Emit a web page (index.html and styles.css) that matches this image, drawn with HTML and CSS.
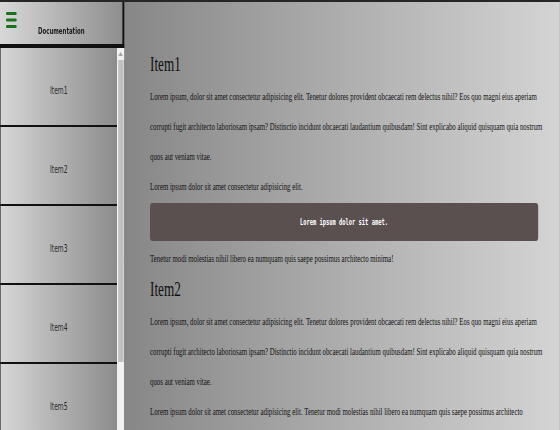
FILE: index.html
```html
<!DOCTYPE html>
<html lang="en">
<head>
<meta charset="utf-8">
<title>Documentation</title>
<link rel="stylesheet" href="styles.css">
</head>
<body>
<div class="page">
  <aside class="sidebar">
    <header class="side-head">
      <svg class="burger" viewBox="0 0 18 16" width="18" height="16" aria-hidden="true">
        <rect x="0" y="0" width="18" height="3" rx="1.5"/>
        <rect x="0" y="6.5" width="18" height="3" rx="1.5"/>
        <rect x="0" y="13" width="18" height="3" rx="1.5"/>
      </svg>
      <div class="side-title">Documentation</div>
    </header>
    <div class="side-body">
      <nav class="side-list">
        <a class="side-item">Item1</a>
        <a class="side-item">Item2</a>
        <a class="side-item">Item3</a>
        <a class="side-item">Item4</a>
        <a class="side-item">Item5</a>
      </nav>
      <div class="scrollbar">
        <div class="sb-btn">
          <svg viewBox="0 0 8 4" width="8" height="4" aria-hidden="true"><polygon points="0,4 4,0 8,4"/></svg>
        </div>
        <div class="sb-thumb"></div>
        <div class="sb-track"></div>
      </div>
    </div>
  </aside>
  <main class="content">
    <section class="doc">
      <h2 class="doc-title">Item1</h2>
      <p class="doc-text">Lorem ipsum, dolor sit amet consectetur adipisicing elit. Tenetur dolores provident obcaecati rem delectus nihil? Eos quo magni eius aperiam corrupti fugit architecto laboriosam ipsam? Distinctio incidunt obcaecati laudantium quibusdam! Sint explicabo aliquid quisquam quia nostrum quos aut veniam vitae.</p>
      <p class="doc-text">Lorem ipsum dolor sit amet consectetur adipisicing elit.</p>
      <div class="code-box">Lorem ipsum dolor sit amet.</div>
      <p class="doc-text">Tenetur modi molestias nihil libero ea numquam quis saepe possimus architecto minima!</p>
    </section>
    <section class="doc">
      <h2 class="doc-title">Item2</h2>
      <p class="doc-text">Lorem ipsum, dolor sit amet consectetur adipisicing elit. Tenetur dolores provident obcaecati rem delectus nihil? Eos quo magni eius aperiam corrupti fugit architecto laboriosam ipsam? Distinctio incidunt obcaecati laudantium quibusdam! Sint explicabo aliquid quisquam quia nostrum quos aut veniam vitae.</p>
      <p class="doc-text">Lorem ipsum dolor sit amet consectetur adipisicing elit. Tenetur modi molestias nihil libero ea numquam quis saepe possimus architecto minima!</p>
    </section>
  </main>
</div>
</body>
</html>
```

FILE: styles.css
```css
* {
  box-sizing: border-box;
}

html,
body {
  margin: 0;
  height: 100%;
  overflow: hidden;
  background: #8a8a8a;
}

/* the whole UI is horizontally condensed */
.page {
  width: 933.33px;
  height: 430px;
  transform: scaleX(0.6);
  transform-origin: 0 0;
  display: flex;
  border-top: 2px solid #262626;
}

.sidebar {
  width: 208.33px;
  flex: none;
  display: flex;
  flex-direction: column;
  border-right: 1.67px solid #5a5a5a;
}

.side-head {
  height: 46px;
  flex: none;
  display: flex;
  flex-direction: column;
  padding: 10px 0 0 10px;
  background: linear-gradient(to right, #d8d8d8, #8e8e8e);
  border-bottom: 4px solid #111;
  border-right: 3.33px solid #111;
}

.burger {
  display: block;
  fill: #167516;
}

.side-title {
  margin: -3px 0 0 -10px;
  line-height: 12px;
  text-align: center;
  font-family: "DejaVu Sans", sans-serif;
  font-weight: bold;
  font-size: 9px;
  color: #1a1a1a;
}

.side-body {
  flex: 1;
  display: flex;
  min-height: 0;
}

.side-list {
  width: 195px;
  flex: none;
  display: flex;
  flex-direction: column;
  overflow: hidden;
}

.side-item {
  height: 79px;
  flex: none;
  display: flex;
  align-items: center;
  justify-content: center;
  padding-top: 8px;
  background: linear-gradient(to right, #d6d6d6, #8c8c8c);
  border-left: 1.67px solid #444;
  border-bottom: 2px solid #111;
  font-family: "DejaVu Sans", sans-serif;
  font-size: 10px;
  color: #2a2a2a;
}

.scrollbar {
  flex: 1;
  display: flex;
  flex-direction: column;
  background: #f1f1f1;
}

.sb-btn {
  height: 12px;
  flex: none;
  display: flex;
  align-items: center;
  justify-content: center;
  background: #f1f1f1;
}

.sb-btn svg {
  fill: #a3a3a3;
}

.sb-thumb {
  height: 302px;
  flex: none;
  background: #c1c1c1;
  margin: 0 1.5px;
}

.sb-track {
  flex: 1;
}

.content {
  flex: 1;
  min-width: 0;
  padding: 49px 25px 0 41.7px;
  background: linear-gradient(to right, #878787, #d4d4d4);
  color: #111;
  font-family: "Liberation Serif", "Times New Roman", serif;
}

.doc-title {
  margin: 0 0 4px;
  font-size: 22px;
  font-weight: normal;
  line-height: 26px;
}

.doc + .doc .doc-title {
  margin-top: 3px;
}

.doc-text {
  margin: 0;
  font-size: 11.4px;
  line-height: 30px;
}

.code-box {
  height: 38px;
  margin: 2px 11.7px 2px 0;
  display: flex;
  align-items: center;
  justify-content: center;
  background: #5a5050;
  border-radius: 4px;
  color: #fff;
  font-family: "DejaVu Sans Mono", monospace;
  font-weight: bold;
  font-size: 9px;
}
```
